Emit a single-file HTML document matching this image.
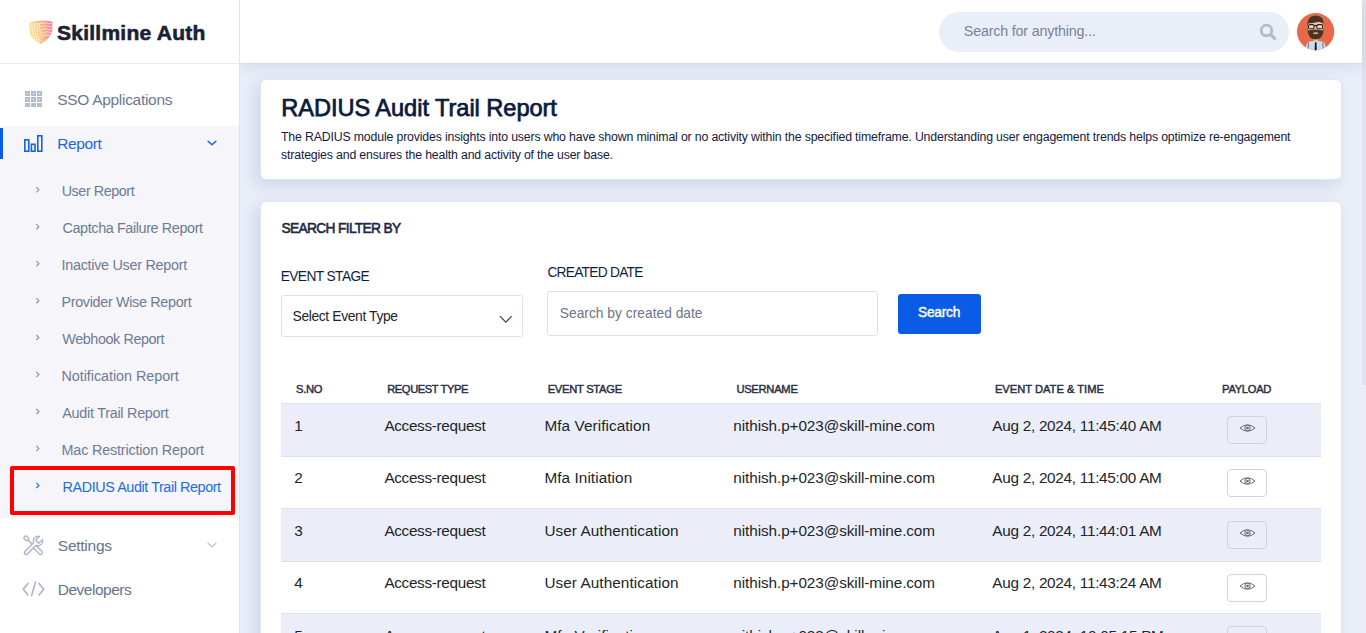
<!DOCTYPE html>
<html><head><meta charset="utf-8">
<style>
*{box-sizing:border-box;margin:0;padding:0}
html,body{width:1366px;height:633px;overflow:hidden}
body{font-family:"Liberation Sans",sans-serif;background:#eaeef9;position:relative}
.abs{position:absolute}
#side{left:0;top:0;width:240px;height:633px;background:#fff;border-right:1px solid #e2e2e9;z-index:5}
#logo{left:0;top:0;width:239px;height:64px;border-bottom:1px solid #e6e8f0}
.brand{left:57px;top:18px;font-size:22px;font-weight:bold;color:#1c2136;letter-spacing:-0.6px;white-space:nowrap}
.nav{left:58px;font-size:16px;color:#6d7a97;white-space:nowrap}
#subbg{left:0;top:126px;width:239px;height:392px;background:#f5f5fa}
.bar{left:0;top:128px;width:3px;height:31px;background:#0b5ce6}
.sub{left:62px;font-size:14px;color:#6f7c98;white-space:nowrap}
.chev{left:35px;width:5px;height:7px}
#hdr{left:240px;top:0;width:1122px;height:63px;background:#fff;box-shadow:0 1px 0 rgba(30,45,90,0.05),0 4px 14px rgba(30,45,90,0.09)}
#sb{left:1362px;top:0;width:4px;height:633px;background:#ebeef9}
#thumb{left:1362px;top:0;width:4px;height:385px;background:#dfe2ee}
.card{left:260px;width:1082px;background:#fff;border:1px solid #d9e6fb;border-radius:6px;box-shadow:-5px 5px 16px rgba(30,45,90,0.12)}
.t{white-space:nowrap}
.th{top:382px;font-size:11px;font-weight:bold;color:#2b3046;letter-spacing:0.5px}
.tr{left:281px;width:1040px;height:52.5px;border-top:1px solid #dde1ee}
.td{font-size:15px;color:#212529}
.eyeb{left:1227px;width:40px;height:28px;border:1px solid #d3d3d3;border-radius:4px}
</style></head><body>
<div id="side" class="abs">
  <div id="logo" class="abs"></div>
  <svg class="abs" style="left:29px;top:19px" width="25" height="27" viewBox="0 0 25 27">
    <defs><linearGradient id="lg" x1="0" y1="0.2" x2="1" y2="0"><stop offset="0" stop-color="#f9d462"/><stop offset="0.5" stop-color="#f8a866"/><stop offset="1" stop-color="#ee4f86"/></linearGradient>
    <clipPath id="sh"><path d="M0.5 3.2 Q11.5 0 23.4 2.7 L23.4 11.5 Q22 19.5 11.2 25.3 Q1.5 19.5 0.8 12.5 Z"/></clipPath></defs>
    <path d="M0.5 3.2 Q11.5 0 23.4 2.7 L23.4 11.5 Q22 19.5 11.2 25.3 Q1.5 19.5 0.8 12.5 Z" fill="url(#lg)" opacity="0.8"/>
    <g clip-path="url(#sh)" stroke="#fff" stroke-width="0.8" fill="none" opacity="0.8">
      <path d="M2.5 3 Q3 14 6 22 M5 3 Q5.5 14 8.5 24 M7.5 3 Q8 14 11 26 M10 4 Q10.5 12 13 18"/>
      <path d="M10 4.5 Q17 3 24 5 M11 7.5 Q18 6 24 8 M12 10.5 Q18 9 24 11 M13 13.5 Q19 12 24 14 M14 16.5 Q19 15 23 17"/>
      <path d="M1 6 Q6 5.5 10 6.5 M1 9 Q6 8.5 11 9.5 M1 12 Q6 11.5 12 12.5 M3 15 Q8 14.5 13 15.5 M4 18 Q9 17.5 14 19 M6 21 Q10 20.5 14 21.5" opacity="0.55"/>
    </g>
  </svg>
  <div id="x_brand" class="abs t" style="left:57.00px;top:21.90px;font-size:21.00px;line-height:21.00px;font-weight:bold;color:#1c2035;letter-spacing:0.247px;-webkit-text-stroke:0.6px currentColor">Skillmine Auth</div>

  <svg class="abs" style="left:25px;top:91px" width="17" height="16" viewBox="0 0 17 16">
    <g fill="none" stroke="#b3bccf" stroke-width="2">
      <rect x="1" y="1" width="3" height="3"/><rect x="7" y="1" width="3" height="3"/><rect x="13" y="1" width="3" height="3"/>
      <rect x="1" y="7" width="3" height="3"/><rect x="7" y="7" width="3" height="3"/><rect x="13" y="7" width="3" height="3"/>
      <rect x="1" y="13" width="3" height="2"/><rect x="7" y="13" width="3" height="2"/><rect x="13" y="13" width="3" height="2"/>
    </g>
  </svg>
  <div id="x_sso" class="abs t" style="left:57.20px;top:92.28px;font-size:15.50px;line-height:15.50px;font-weight:normal;color:#6b7894;letter-spacing:-0.300px;">SSO Applications</div>

  <div id="subbg" class="abs"></div>
  <div class="abs bar"></div>
  <svg class="abs" style="left:24px;top:135px" width="20" height="17" viewBox="0 0 20 17">
    <g fill="none" stroke="#1565e0" stroke-width="1.6">
      <rect x="0.8" y="4.8" width="4" height="11.4"/><rect x="7.4" y="9.3" width="3.6" height="6.9"/><rect x="13.8" y="0.8" width="4" height="15.4"/>
    </g>
  </svg>
  <div id="x_report" class="abs t" style="left:57.20px;top:135.88px;font-size:15.50px;line-height:15.50px;font-weight:normal;color:#1a66e0;letter-spacing:-0.360px;">Report</div>
  <svg class="abs" style="left:207px;top:140px" width="10" height="6" viewBox="0 0 10 6"><path d="M1.1 1.2 L5 4.8 L8.9 1.2" fill="none" stroke="#1565e0" stroke-width="1.5" stroke-linecap="round" stroke-linejoin="round"/></svg>

  <div id="x_s1" class="abs t" style="left:61.70px;top:184.12px;font-size:14.39px;line-height:14.39px;font-weight:normal;color:#6f7b96;letter-spacing:-0.450px;">User Report</div>
  <div id="x_s2" class="abs t" style="left:62.50px;top:221.12px;font-size:14.39px;line-height:14.39px;font-weight:normal;color:#6f7b96;letter-spacing:-0.383px;">Captcha Failure Report</div>
  <div id="x_s3" class="abs t" style="left:61.50px;top:258.12px;font-size:14.39px;line-height:14.39px;font-weight:normal;color:#6f7b96;letter-spacing:-0.281px;">Inactive User Report</div>
  <div id="x_s4" class="abs t" style="left:61.50px;top:295.02px;font-size:14.39px;line-height:14.39px;font-weight:normal;color:#6f7b96;letter-spacing:-0.333px;">Provider Wise Report</div>
  <div id="x_s5" class="abs t" style="left:62.30px;top:331.92px;font-size:14.39px;line-height:14.39px;font-weight:normal;color:#6f7b96;letter-spacing:-0.418px;">Webhook Report</div>
  <div id="x_s6" class="abs t" style="left:61.50px;top:368.82px;font-size:14.39px;line-height:14.39px;font-weight:normal;color:#6f7b96;letter-spacing:-0.050px;">Notification Report</div>
  <div id="x_s7" class="abs t" style="left:62.30px;top:405.82px;font-size:14.39px;line-height:14.39px;font-weight:normal;color:#6f7b96;letter-spacing:-0.266px;">Audit Trail Report</div>
  <div id="x_s8" class="abs t" style="left:61.50px;top:442.82px;font-size:14.39px;line-height:14.39px;font-weight:normal;color:#6f7b96;letter-spacing:-0.171px;">Mac Restriction Report</div>
  <div id="x_s9" class="abs t" style="left:62.60px;top:479.82px;font-size:14.39px;line-height:14.39px;font-weight:normal;color:#1a6de2;letter-spacing:-0.420px;">RADIUS Audit Trail Report</div>
  <svg class="abs" style="left:35px;top:184.3px" width="6" height="310" viewBox="0 0 6 310"><g fill="none" stroke="#8d97ad" stroke-width="1.2"><path d="M1.3 3.20 L3.9 5.80 L1.3 8.40"/><path d="M1.3 40.15 L3.9 42.75 L1.3 45.35"/><path d="M1.3 77.10 L3.9 79.70 L1.3 82.30"/><path d="M1.3 114.05 L3.9 116.65 L1.3 119.25"/><path d="M1.3 151.00 L3.9 153.60 L1.3 156.20"/><path d="M1.3 187.95 L3.9 190.55 L1.3 193.15"/><path d="M1.3 224.90 L3.9 227.50 L1.3 230.10"/><path d="M1.3 261.85 L3.9 264.45 L1.3 267.05"/><path d="M1.3 298.80 L3.9 301.40 L1.3 304.00" stroke="#1b6fe3"/></g></svg>
  <div class="abs" style="left:10px;top:466px;width:225px;height:49px;border:4px solid #fe0000;border-radius:2px"></div>

  <svg class="abs" style="left:20px;top:532px" width="28" height="26" viewBox="0 0 28 26">
    <defs><clipPath id="wc"><circle cx="18" cy="9" r="4.0"/></clipPath></defs>
    <path d="M14.8 14.8 L20.6 20.6" stroke="#aab4c9" stroke-width="5" stroke-linecap="round"/>
    <path d="M14.8 14.8 L20.6 20.6" stroke="#fff" stroke-width="2.2" stroke-linecap="round"/>
    <path d="M8 8 L13.5 13.5" stroke="#aab4c9" stroke-width="1.4"/>
    <g transform="rotate(45 6.3 6.3)"><rect x="3.9" y="4.6" width="4.8" height="3.4" rx="1.3" fill="none" stroke="#aab4c9" stroke-width="1.4"/></g>
    <circle cx="18" cy="9" r="5.4" fill="#aab4c9"/>
    <path d="M6.1 20.7 L15 11.8" stroke="#aab4c9" stroke-width="4.8" stroke-linecap="round"/>
    <g transform="rotate(-45 18 9)"><rect x="17.6" y="7.5" width="9" height="3" fill="#fff"/></g>
    <circle cx="18" cy="9" r="4.0" fill="#fff"/>
    <path d="M6.1 20.7 L15 11.8" stroke="#fff" stroke-width="2" stroke-linecap="round"/>
    <g clip-path="url(#wc)"><g transform="rotate(-45 18 9)"><rect x="16.2" y="6.1" width="10" height="5.8" fill="#aab4c9"/></g></g>
    <g transform="rotate(-45 18 9)"><rect x="17.6" y="7.5" width="9" height="3" fill="#fff"/></g>
  </svg>
  <div id="x_settings" class="abs t" style="left:57.80px;top:537.68px;font-size:15.50px;line-height:15.50px;font-weight:normal;color:#66738f;letter-spacing:-0.255px;">Settings</div>
  <svg class="abs" style="left:207px;top:542.3px" width="10" height="6" viewBox="0 0 10 6"><path d="M1.1 1.2 L5 4.8 L8.9 1.2" fill="none" stroke="#bcc3d2" stroke-width="1.3" stroke-linecap="round" stroke-linejoin="round"/></svg>

  <svg class="abs" style="left:22px;top:580px" width="24" height="18" viewBox="0 0 24 18">
    <g fill="none" stroke="#aab3c6" stroke-width="1.6">
      <path d="M6.3 3 L1.2 9.3 L6.3 15.5"/><path d="M16.6 3 L21.7 9.3 L16.6 15.5"/><path d="M13.6 1.4 L9.4 16.4"/>
    </g>
  </svg>
  <div id="x_dev" class="abs t" style="left:57.80px;top:581.68px;font-size:15.50px;line-height:15.50px;font-weight:normal;color:#66738f;letter-spacing:-0.500px;">Developers</div>
</div>

<div id="sb" class="abs"></div>
<div id="thumb" class="abs"></div>

<div class="abs card" style="top:79px;height:101px"></div>
<div id="x_title" class="abs t" style="left:281.20px;top:96.82px;font-size:23.60px;line-height:23.60px;font-weight:normal;color:#0b1a3e;letter-spacing:-0.039px;-webkit-text-stroke:0.75px currentColor">RADIUS Audit Trail Report</div>
<div id="x_desc1" class="abs t" style="left:281px;top:127.9px;font-size:12.3px;line-height:18px;letter-spacing:-0.155px;color:#13203f">The RADIUS module provides insights into users who have shown minimal or no activity within the specified timeframe. Understanding user engagement trends helps optimize re-engagement</div><div id="x_desc2" class="abs t" style="left:281px;top:145.9px;font-size:12.3px;line-height:18px;letter-spacing:-0.155px;color:#13203f">strategies and ensures the health and activity of the user base.</div>

<div class="abs card" style="top:201px;height:460px"></div>
<div id="x_sfb" class="abs t" style="left:281.50px;top:222.31px;font-size:13.75px;line-height:13.75px;font-weight:normal;color:#1b2744;letter-spacing:-0.660px;-webkit-text-stroke:0.55px currentColor">SEARCH FILTER BY</div>
<div id="x_es" class="abs t" style="left:280.70px;top:269.96px;font-size:13.75px;line-height:13.75px;font-weight:normal;color:#0e1d3f;letter-spacing:-0.594px;">EVENT STAGE</div>
<div class="abs" style="left:281px;top:295px;width:242px;height:42px;border:1px solid #dce1eb;border-radius:3px;background:#fff"></div>
<div id="x_sel" class="abs t" style="left:292.50px;top:309.93px;font-size:13.90px;line-height:13.90px;font-weight:normal;color:#212529;letter-spacing:-0.385px;">Select Event Type</div>
<svg class="abs" style="left:499px;top:315px" width="14" height="9" viewBox="0 0 14 9"><path d="M1 1.2 L6.8 7.2 L12.6 1.2" fill="none" stroke="#343a40" stroke-width="1.1"/></svg>
<div id="x_cd" class="abs t" style="left:547.38px;top:265.96px;font-size:13.75px;line-height:13.75px;font-weight:normal;color:#0e1d3f;letter-spacing:-0.736px;">CREATED DATE</div>
<div class="abs" style="left:547px;top:291px;width:331px;height:45px;border:1px solid #dce1eb;border-radius:3px;background:#fff"></div>
<div id="x_dph" class="abs t" style="left:559.82px;top:306.96px;font-size:13.75px;line-height:13.75px;font-weight:normal;color:#6c7587;letter-spacing:0.025px;">Search by created date</div>
<div class="abs" style="left:898px;top:294px;width:83px;height:40px;border-radius:3px;background:#0a5ce6"></div>
<div id="x_btn" class="abs t" style="left:918.00px;top:306.11px;font-size:13.75px;line-height:13.75px;font-weight:normal;color:#ffffff;letter-spacing:-0.252px;-webkit-text-stroke:0.4px currentColor">Search</div>

<div id="x_th1" class="abs t" style="left:296.10px;top:383.54px;font-size:11.17px;line-height:11.17px;font-weight:normal;color:#2a2f45;letter-spacing:-0.300px;-webkit-text-stroke:0.45px currentColor">S.NO</div>
<div id="x_th2" class="abs t" style="left:387.20px;top:383.54px;font-size:11.17px;line-height:11.17px;font-weight:normal;color:#2a2f45;letter-spacing:-0.409px;-webkit-text-stroke:0.45px currentColor">REQUEST TYPE</div>
<div id="x_th3" class="abs t" style="left:547.70px;top:383.54px;font-size:11.17px;line-height:11.17px;font-weight:normal;color:#2a2f45;letter-spacing:-0.270px;-webkit-text-stroke:0.45px currentColor">EVENT STAGE</div>
<div id="x_th4" class="abs t" style="left:736.40px;top:383.54px;font-size:11.17px;line-height:11.17px;font-weight:normal;color:#2a2f45;letter-spacing:-0.257px;-webkit-text-stroke:0.45px currentColor">USERNAME</div>
<div id="x_th5" class="abs t" style="left:994.90px;top:383.54px;font-size:11.17px;line-height:11.17px;font-weight:normal;color:#2a2f45;letter-spacing:-0.004px;-webkit-text-stroke:0.45px currentColor">EVENT DATE &amp; TIME</div>
<div id="x_th6" class="abs t" style="left:1222.10px;top:383.54px;font-size:11.17px;line-height:11.17px;font-weight:normal;color:#2a2f45;letter-spacing:-0.300px;-webkit-text-stroke:0.45px currentColor">PAYLOAD</div>
<div class="abs tr" style="top:403px;background:#ebeef9"></div>
<div id="x_td00" class="abs t td" style="left:294.20px;top:417.60px;font-size:15.3px;line-height:15.3px;letter-spacing:0.000px">1</div>
<div id="x_td01" class="abs t td" style="left:384.40px;top:417.60px;font-size:15.3px;line-height:15.3px;letter-spacing:-0.320px">Access-request</div>
<div id="x_td02" class="abs t td" style="left:544.40px;top:417.60px;font-size:15.3px;line-height:15.3px;letter-spacing:0.080px">Mfa Verification</div>
<div id="x_td03" class="abs t td" style="left:733.30px;top:417.60px;font-size:15.3px;line-height:15.3px;letter-spacing:-0.078px">nithish.p+023@skill-mine.com</div>
<div id="x_td04" class="abs t td" style="left:992.30px;top:417.60px;font-size:15.3px;line-height:15.3px;letter-spacing:-0.270px">Aug 2, 2024, 11:45:40 AM</div>
<div class="abs eyeb" style="top:416px;background:#ebeef9"></div><svg class="abs" style="left:1239px;top:423px" width="17" height="10" viewBox="0 0 17 10"><path d="M1 5 Q8.5 -1.5 16 5 Q8.5 11.5 1 5 Z" fill="none" stroke="#6a6a6a" stroke-width="1"/><circle cx="8.5" cy="5" r="2.7" fill="none" stroke="#6a6a6a" stroke-width="1"/><circle cx="8.5" cy="5" r="1.3" fill="#6a6a6a"/></svg>
<div class="abs tr" style="top:455.5px;background:#fff"></div>
<div id="x_td10" class="abs t td" style="left:294.20px;top:470.10px;font-size:15.3px;line-height:15.3px;letter-spacing:0.000px">2</div>
<div id="x_td11" class="abs t td" style="left:384.40px;top:470.10px;font-size:15.3px;line-height:15.3px;letter-spacing:-0.320px">Access-request</div>
<div id="x_td12" class="abs t td" style="left:544.40px;top:470.10px;font-size:15.3px;line-height:15.3px;letter-spacing:0.080px">Mfa Initiation</div>
<div id="x_td13" class="abs t td" style="left:733.30px;top:470.10px;font-size:15.3px;line-height:15.3px;letter-spacing:-0.078px">nithish.p+023@skill-mine.com</div>
<div id="x_td14" class="abs t td" style="left:992.30px;top:470.10px;font-size:15.3px;line-height:15.3px;letter-spacing:-0.270px">Aug 2, 2024, 11:45:00 AM</div>
<div class="abs eyeb" style="top:468.5px;background:#fff"></div><svg class="abs" style="left:1239px;top:475.5px" width="17" height="10" viewBox="0 0 17 10"><path d="M1 5 Q8.5 -1.5 16 5 Q8.5 11.5 1 5 Z" fill="none" stroke="#6a6a6a" stroke-width="1"/><circle cx="8.5" cy="5" r="2.7" fill="none" stroke="#6a6a6a" stroke-width="1"/><circle cx="8.5" cy="5" r="1.3" fill="#6a6a6a"/></svg>
<div class="abs tr" style="top:508px;background:#ebeef9"></div>
<div id="x_td20" class="abs t td" style="left:294.20px;top:522.60px;font-size:15.3px;line-height:15.3px;letter-spacing:0.000px">3</div>
<div id="x_td21" class="abs t td" style="left:384.40px;top:522.60px;font-size:15.3px;line-height:15.3px;letter-spacing:-0.320px">Access-request</div>
<div id="x_td22" class="abs t td" style="left:544.40px;top:522.60px;font-size:15.3px;line-height:15.3px;letter-spacing:0.080px">User Authentication</div>
<div id="x_td23" class="abs t td" style="left:733.30px;top:522.60px;font-size:15.3px;line-height:15.3px;letter-spacing:-0.078px">nithish.p+023@skill-mine.com</div>
<div id="x_td24" class="abs t td" style="left:992.30px;top:522.60px;font-size:15.3px;line-height:15.3px;letter-spacing:-0.270px">Aug 2, 2024, 11:44:01 AM</div>
<div class="abs eyeb" style="top:521px;background:#ebeef9"></div><svg class="abs" style="left:1239px;top:528px" width="17" height="10" viewBox="0 0 17 10"><path d="M1 5 Q8.5 -1.5 16 5 Q8.5 11.5 1 5 Z" fill="none" stroke="#6a6a6a" stroke-width="1"/><circle cx="8.5" cy="5" r="2.7" fill="none" stroke="#6a6a6a" stroke-width="1"/><circle cx="8.5" cy="5" r="1.3" fill="#6a6a6a"/></svg>
<div class="abs tr" style="top:560.5px;background:#fff"></div>
<div id="x_td30" class="abs t td" style="left:294.20px;top:575.10px;font-size:15.3px;line-height:15.3px;letter-spacing:0.000px">4</div>
<div id="x_td31" class="abs t td" style="left:384.40px;top:575.10px;font-size:15.3px;line-height:15.3px;letter-spacing:-0.320px">Access-request</div>
<div id="x_td32" class="abs t td" style="left:544.40px;top:575.10px;font-size:15.3px;line-height:15.3px;letter-spacing:0.080px">User Authentication</div>
<div id="x_td33" class="abs t td" style="left:733.30px;top:575.10px;font-size:15.3px;line-height:15.3px;letter-spacing:-0.078px">nithish.p+023@skill-mine.com</div>
<div id="x_td34" class="abs t td" style="left:992.30px;top:575.10px;font-size:15.3px;line-height:15.3px;letter-spacing:-0.270px">Aug 2, 2024, 11:43:24 AM</div>
<div class="abs eyeb" style="top:573.5px;background:#fff"></div><svg class="abs" style="left:1239px;top:580.5px" width="17" height="10" viewBox="0 0 17 10"><path d="M1 5 Q8.5 -1.5 16 5 Q8.5 11.5 1 5 Z" fill="none" stroke="#6a6a6a" stroke-width="1"/><circle cx="8.5" cy="5" r="2.7" fill="none" stroke="#6a6a6a" stroke-width="1"/><circle cx="8.5" cy="5" r="1.3" fill="#6a6a6a"/></svg>
<div class="abs tr" style="top:613px;background:#ebeef9"></div>
<div id="x_td40" class="abs t td" style="left:294.20px;top:627.60px;font-size:15.3px;line-height:15.3px;letter-spacing:0.000px">5</div>
<div id="x_td41" class="abs t td" style="left:384.40px;top:627.60px;font-size:15.3px;line-height:15.3px;letter-spacing:-0.320px">Access-request</div>
<div id="x_td42" class="abs t td" style="left:544.40px;top:627.60px;font-size:15.3px;line-height:15.3px;letter-spacing:0.080px">Mfa Verification</div>
<div id="x_td43" class="abs t td" style="left:733.30px;top:627.60px;font-size:15.3px;line-height:15.3px;letter-spacing:-0.078px">nithish.p+023@skill-mine.com</div>
<div id="x_td44" class="abs t td" style="left:992.30px;top:627.60px;font-size:15.3px;line-height:15.3px;letter-spacing:-0.270px">Aug 1, 2024, 10:05:15 PM</div>
<div class="abs eyeb" style="top:626px;background:#ebeef9"></div><svg class="abs" style="left:1239px;top:633px" width="17" height="10" viewBox="0 0 17 10"><path d="M1 5 Q8.5 -1.5 16 5 Q8.5 11.5 1 5 Z" fill="none" stroke="#6a6a6a" stroke-width="1"/><circle cx="8.5" cy="5" r="2.7" fill="none" stroke="#6a6a6a" stroke-width="1"/><circle cx="8.5" cy="5" r="1.3" fill="#6a6a6a"/></svg>
<div id="hdr" class="abs"></div>
<div class="abs" style="left:939px;top:12px;width:350px;height:40px;border-radius:20px;background:#eaeef9"></div>
<div id="x_search_ph" class="abs t" style="left:963.82px;top:23.78px;font-size:14.32px;line-height:14.32px;font-weight:normal;color:#7a839a;letter-spacing:-0.189px;">Search for anything...</div>
<svg class="abs" style="left:1259px;top:23px;z-index:2" width="19" height="19" viewBox="0 0 19 19"><circle cx="7.5" cy="7.4" r="5.3" fill="none" stroke="#b3bbca" stroke-width="2.9"/><path d="M12 11.9 L15.7 15.5" stroke="#b3bbca" stroke-width="3.3" stroke-linecap="round"/></svg>
<svg class="abs" style="left:1297px;top:13px;z-index:2" width="38" height="38" viewBox="0 0 38 38">
  <defs><clipPath id="cc"><circle cx="18.6" cy="18.6" r="18.6"/></clipPath></defs>
  <circle cx="18.6" cy="18.6" r="18.6" fill="#e8694a"/>
  <g clip-path="url(#cc)">
    <path d="M8.5 38 L9.5 31 Q11 28.2 16 28 L21.5 28 Q26.5 28.2 28 31 L29 38 Z" fill="#c9dbee"/>
    <path d="M11.5 29.5 L11 38 M25.8 29.5 L26.3 38" stroke="#5d6f86" stroke-width="0.9"/>
    <path d="M16.3 25 L21.2 25 L21.2 28.6 Q18.7 30 16.3 28.6 Z" fill="#f0c39a"/>
    <path d="M18 29.3 L19.4 29.3 L19.8 38 L17.6 38 Z" fill="#111"/>
    <path d="M10.8 8.5 Q10.8 20 12.5 21 L25 21 Q26.7 20 26.7 8.5 Z" fill="#f4c9a0"/>
    <path d="M10.4 15.5 Q10.6 26.2 18.6 26.4 Q26.6 26.2 26.8 15.5 L25.5 17.5 Q18.6 15.5 11.7 17.5 Z" fill="#4b3328"/>
    <ellipse cx="18.7" cy="20.2" rx="2.6" ry="0.9" fill="#e8b48c"/>
    <path d="M10.4 13.5 Q9.8 2.6 18.6 2.6 Q27.4 2.6 26.9 13 L26 10.5 Q23.5 8.5 21 9 Q16 10.2 11.4 10.5 Z" fill="#4b3328"/>
    <g fill="#f1d1b4" stroke="#2a2320" stroke-width="1.1"><rect x="11.5" y="11.6" width="5.6" height="4.2" rx="1.4"/><rect x="19.9" y="11.6" width="5.8" height="4.2" rx="1.4"/></g>
    <path d="M17.1 12.6 L19.9 12.6" stroke="#2a2320" stroke-width="1.1"/>
  </g>
</svg>
</body></html>
